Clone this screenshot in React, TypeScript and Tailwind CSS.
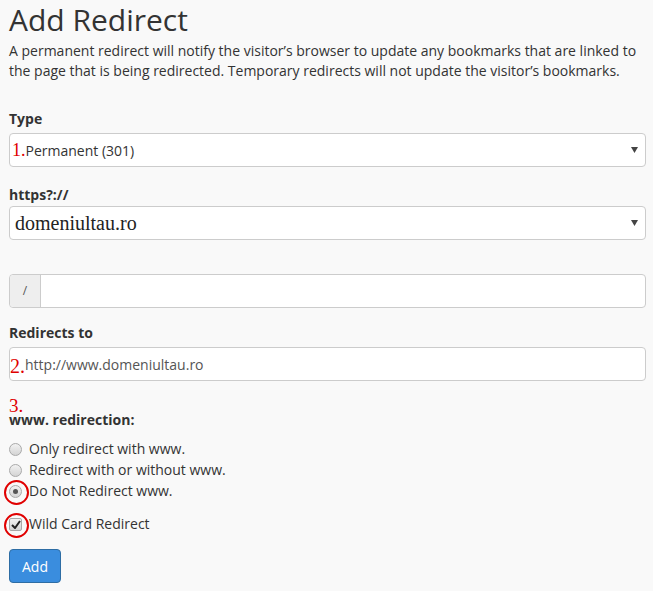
import React from "react"

const font = { fontFamily: '"Open Sans", "Noto Sans", sans-serif' }
const serif = { fontFamily: '"Liberation Serif", serif' }

function Caret() {
  return (
    <svg className="absolute right-[7px] top-1/2 -translate-y-1/2" width="7" height="6" viewBox="0 0 7 6">
      <path d="M0 0 H7 L3.5 6 Z" fill="#444" />
    </svg>
  )
}

function Radio({ checked }: { checked?: boolean }) {
  return (
    <span className="relative flex h-[13px] w-[13px] shrink-0 items-center justify-center rounded-full border border-[#a9a9a9] bg-gradient-to-b from-[#f2f2f2] to-[#d4d4d4]">
      {checked && <span className="h-[5px] w-[5px] rounded-full bg-[#555]" />}
      {checked && <span className="absolute -left-[6px] -top-[6px] h-[25px] w-[25px] rounded-full border-2 border-[#e00000]" />}
    </span>
  )
}

export default function App() {
  return (
    <div className="min-h-[591px] w-[653px] bg-[#f9f9f9] px-[9px] pt-[2px] text-[#333]" style={font}>
      <h1 className="text-[30px] leading-[36px] font-normal">Add Redirect</h1>
      <p className="mt-[3px] text-[14px] leading-[20px]">
        A permanent redirect will notify the visitor’s browser to update any bookmarks that are linked to the page that is being redirected. Temporary redirects will not update the visitor’s bookmarks.
      </p>

      <label className="mt-[28px] block text-[14px] leading-[20px] font-bold">Type</label>
      <div className="relative mt-[4px] flex h-[34px] w-[637px] items-center rounded-[4px] border border-[#ccc] bg-white pl-[2px] text-[14px]">
        <span className="text-[18px] text-[#e00000]" style={serif}>1.</span>
        <span>Permanent (301)</span>
        <Caret />
      </div>

      <label className="mt-[18px] block text-[14px] leading-[20px] font-bold">https?://</label>
      <div className="relative mt-[1px] flex h-[34px] w-[637px] items-center rounded-[4px] border border-[#ccc] bg-white pl-[5px] text-[20px] text-[#222]" style={serif}>
        domeniultau.ro
        <Caret />
      </div>

      <div className="mt-[34px] flex h-[34px] w-[637px] rounded-[4px] border border-[#ccc] bg-white">
        <span className="flex w-[31px] items-center justify-center rounded-l-[4px] border-r border-[#ccc] bg-[#eee] text-[12px] text-[#555]">/</span>
        <span className="flex-1" />
      </div>

      <label className="mt-[15px] block text-[14px] leading-[20px] font-bold">Redirects to</label>
      <div className="mt-[4px] flex h-[34px] w-[637px] items-center rounded-[4px] border border-[#ccc] bg-white text-[14px] text-[#555]">
        <span className="mt-[4px] text-[20px] leading-none text-[#e00000]" style={serif}>2.</span>
        <span>http://www.domeniultau.ro</span>
      </div>

      <div className="mt-[18px] text-[19px] leading-[13px] text-[#e00000]" style={serif}>3.</div>
      <label className="block text-[14px] leading-[16px] font-bold">www. redirection:</label>

      <div className="mt-[11px] flex flex-col gap-[1px] text-[14px] leading-[20px]">
        <div className="flex items-center gap-[7px]"><Radio /><span>Only redirect with www.</span></div>
        <div className="flex items-center gap-[7px]"><Radio /><span>Redirect with or without www.</span></div>
        <div className="flex items-center gap-[7px]"><Radio checked /><span>Do Not Redirect www.</span></div>
      </div>

      <div className="mt-[13px] flex items-center gap-[7px] text-[14px] leading-[20px]">
        <span className="relative flex h-[13px] w-[13px] shrink-0 items-center justify-center rounded-[2px] border border-[#a9a9a9] bg-gradient-to-b from-[#f2f2f2] to-[#d4d4d4]">
          <svg width="10" height="9" viewBox="0 0 10 9">
            <path d="M1 5 L4 8 L9 1" stroke="#222" strokeWidth="2" fill="none" />
          </svg>
          <span className="absolute -left-[6px] -top-[6px] h-[25px] w-[25px] rounded-full border-2 border-[#e00000]" />
        </span>
        <span>Wild Card Redirect</span>
      </div>

      <button className="mt-[15px] h-[34px] w-[52px] rounded-[4px] border border-[#2e6da4] bg-[#3a8dde] text-[14px] text-white">Add</button>
    </div>
  )
}
